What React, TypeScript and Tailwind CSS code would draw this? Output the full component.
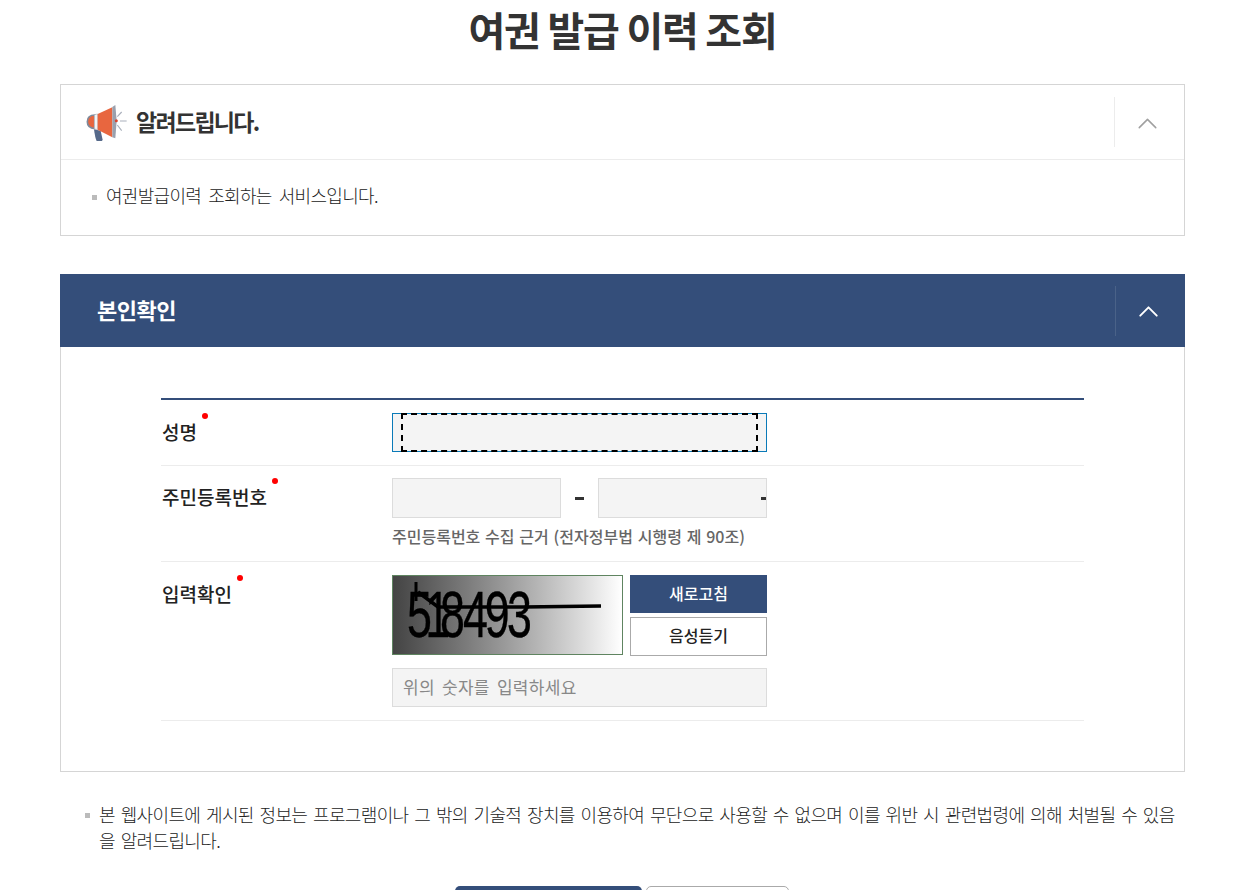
import { ChevronUp } from 'lucide-react';

const FONT = "font-['Noto_Sans_CJK_KR','Noto_Sans',sans-serif]";

function Megaphone() {
  return (
    <svg width="42" height="37" viewBox="15 12 126 111" className="block">
      <path d="M42 88 L62 92 L68 120 Q62 128 52 126 Q46 120 42 88 Z" fill="#56698a" />
      <path d="M45 45 Q22 45 22 65 Q22 84 45 86 Z" fill="#e8663f" stroke="#7e8a9b" strokeWidth="5" />
      <path d="M43 44 L53 42 L53 89 L43 87 Z" fill="#f4f4f4" stroke="#9aa0ad" strokeWidth="1.500" />
      <path d="M53 42 L97 22 L97 112 L53 89 Z" fill="#e8663f" />
      <path d="M97 21 L106 15 L110 62 L106 115 L97 112 Z" fill="#9aa0ad" />
      <circle cx="109" cy="62" r="4.500" fill="#d9452f" />
      <path d="M112 50 L125 36 M120 63 L140 63 M112 75 L125 92" stroke="#aab0bc" strokeWidth="3.500" fill="none" />
    </svg>
  );
}

function Captcha() {
  return (
    <div className="w-[231px] h-[80px] border border-[#5f8460] bg-gradient-to-r from-[#444444] to-[#ffffff]">
      <svg width="229" height="78" viewBox="0 0 229 78" className="block">
        <text
          transform="scale(0.7 1)"
          x="20 46 67 100 131 163"
          y="61"
          fontFamily="'Liberation Sans', sans-serif"
          fontSize="64"
          fill="#000000"
          stroke="#000000"
          strokeWidth="0.4"
        >
          518493
        </text>
        <path d="M23 6 L23 25" stroke="#000" strokeWidth="3" />
        <path d="M25 16 L45 31 L130 31 L208 30" stroke="#000" strokeWidth="3.500" fill="none" />
      </svg>
    </div>
  );
}

function Label({ text }: { text: string }) {
  return (
    <div className="w-[231px] shrink-0 pl-px">
      <span className="relative inline-block text-[19px] leading-[26px] font-medium text-[#222222]">
        {text}
        <span className="absolute -right-[11px] -top-[6px] w-[6px] h-[6px] rounded-full bg-[#ff0000]" />
      </span>
    </div>
  );
}

export default function App() {
  return (
    <div className={`${FONT} h-[890px] overflow-hidden bg-white text-[#333333]`}>
      <div className="w-[1125px] ml-[60px]">
        <h1 className="h-[84px] text-center text-[40px] leading-[58px] font-bold tracking-[-1.250px] text-[#333333]">
          여권 발급 이력 조회
        </h1>

        <section className="border border-[#d5d5d5] h-[152px]">
          <div className="h-[75px] flex items-center border-b border-[#ececec]">
            <div className="ml-[24px]">
              <Megaphone />
            </div>
            <strong className="ml-[9px] pb-[2px] text-[23px] leading-[34px] font-bold tracking-[-1.700px] text-[#333333]">
              알려드립니다.
            </strong>
            <div className="ml-auto w-[70px] h-[50px] pr-[5px] pt-[3px] border-l border-[#ececec] flex items-center justify-center">
              <ChevronUp size={33} strokeWidth={1.100} className="text-[#a0a0a0]" />
            </div>
          </div>
          <div className="pl-[31px] pt-[21px] flex items-center">
            <span className="mt-[4px] w-[5px] h-[5px] bg-[#bbbbbb]" />
            <p className="ml-[9px] text-[18px] leading-[28px] tracking-[-0.700px] [word-spacing:3.800px] font-light text-[#222222]">
              여권발급이력 조회하는 서비스입니다.
            </p>
          </div>
        </section>

        <section className="mt-[38px]">
          <div className="h-[73px] bg-[#344e7a] flex items-center">
            <h2 className="ml-[37px] pb-[4px] text-[22px] leading-[32px] font-bold tracking-[-0.500px] text-white">본인확인</h2>
            <div className="ml-auto w-[70px] h-[50px] pr-[5px] pt-[1px] border-l border-[#4a6288] flex items-center justify-center">
              <ChevronUp size={33} strokeWidth={1.400} className="text-white" />
            </div>
          </div>
          <div className="h-[425px] border border-t-0 border-[#d5d5d5] px-[100px] pt-[51px]">
            <div className="w-[923px] border-t-2 border-[#344e7a]">
              <div className="h-[66px] flex border-b border-[#ececec] pt-[13px]">
                <div className="pt-[6px] flex">
                  <Label text="성명" />
                </div>
                <div className="relative w-[375px] h-[39px] bg-[#f4f4f4] border border-[#0a7ab8]">
                  <div className="absolute left-[8px] -top-[1px] -bottom-[1px] right-[8px] border-2 border-dashed border-black" />
                </div>
              </div>

              <div className="h-[96px] flex border-b border-[#ececec] pt-[12px]">
                <div className="pt-[6px] flex">
                  <Label text="주민등록번호" />
                </div>
                <div className="w-[375px]">
                  <div className="flex items-center h-[40px]">
                    <div className="w-[169px] h-[40px] bg-[#f4f4f4] border border-[#dcdcdc]" />
                    <div className="w-[37px] flex justify-center">
                      <span className="w-[9px] h-[3px] bg-[#333333]" />
                    </div>
                    <div className="w-[169px] h-[40px] bg-[#f4f4f4] border border-[#dcdcdc] flex items-center justify-end">
                      <span className="w-[5px] h-[3px] bg-[#333333]" />
                    </div>
                  </div>
                  <p className="mt-[6px] text-[16px] leading-[24px] font-medium [word-spacing:1.200px] text-[#666666]">
                    주민등록번호 수집 근거 (전자정부법 시행령 제 90조)
                  </p>
                </div>
              </div>

              <div className="h-[159px] flex border-b border-[#ececec] pt-[13px]">
                <div className="pt-[6px] flex">
                  <Label text="입력확인" />
                </div>
                <div className="w-[375px]">
                  <div className="flex justify-between">
                    <Captcha />
                    <div className="w-[137px]">
                      <button className="block w-full h-[38px] pb-[2px] bg-[#344e7a] text-white text-[16px] font-medium">
                        새로고침
                      </button>
                      <button className="block mt-[4px] w-full h-[39px] pb-[3px] bg-white border border-[#aaaaaa] text-[#222222] text-[16px] font-medium">
                        음성듣기
                      </button>
                    </div>
                  </div>
                  <input
                    readOnly
                    placeholder="위의 숫자를 입력하세요"
                    className="mt-[12px] block w-full h-[39px] px-[10px] pb-[3px] bg-[#f4f4f4] border border-[#dcdcdc] text-[17px] tracking-[0.300px] [word-spacing:3px] placeholder:text-[#888888] outline-none"
                  />
                </div>
              </div>
            </div>
          </div>
        </section>

        <div className="mt-[29px] pl-[25px] pr-[5px] relative text-[18px] leading-[26px] tracking-[-0.640px] [word-spacing:2.400px] font-light text-[#222222]">
          <span className="absolute left-[25px] top-[12px] w-[5px] h-[5px] bg-[#bbbbbb]" />
          <p className="pl-[14px] break-all">
            본 웹사이트에 게시된 정보는 프로그램이나 그 밖의 기술적 장치를 이용하여 무단으로 사용할 수 없으며 이를 위반 시 관련법령에 의해 처벌될 수 있음을 알려드립니다.
          </p>
        </div>

        {/* only the top edge of these two buttons shows in the picture */}
        <div className="mt-[33px] pr-[2px] flex justify-center gap-[4px]">
          <div className="w-[187px] h-[50px] rounded-[5px] bg-[#344e7a]" />
          <div className="w-[143px] h-[50px] rounded-[5px] bg-white border border-[#aaaaaa]" />
        </div>
      </div>
    </div>
  );
}
